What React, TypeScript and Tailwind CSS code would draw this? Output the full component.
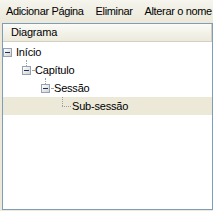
import React from 'react';

const font = { fontFamily: '"Liberation Sans", Arial, sans-serif' };

function Expander() {
  return (
    <span className="relative flex h-[9px] w-[9px] shrink-0 items-center justify-center border border-[#93a2b8] bg-gradient-to-br from-white to-[#d6d3c6]">
      <span className="h-px w-[5px] bg-[#1c2c6c]" />
    </span>
  );
}

interface NodeProps {
  label: string;
  indent: string;
  line?: boolean;
  leaf?: boolean;
  selected?: boolean;
}

function TreeRow({ label, indent, line = false, leaf = false, selected = false }: NodeProps) {
  return (
    <div className={`relative flex h-[18px] items-center ${indent} ${selected ? 'bg-[#ece9d8]' : ''}`}>
      {leaf ? (
        <span className="relative h-full w-[9px] shrink-0">
          <span className="absolute left-0 top-0 h-[9px] border-l border-dotted border-[#a0a0a0]" />
          <span className="absolute left-0 top-[9px] w-[9px] border-t border-dotted border-[#a0a0a0]" />
        </span>
      ) : (
        <span className="relative flex items-center">
          {line && <span className="absolute bottom-[9px] left-[4px] h-[6px] border-l border-dotted border-[#a0a0a0]" />}
          <Expander />
          {line && <span className="ml-px w-[2px] border-t border-dotted border-[#a0a0a0]" />}
        </span>
      )}
      <span className={`${line || leaf ? 'ml-px' : 'ml-[4px]'} text-[11px] leading-none tracking-[-0.2px] text-black`}>{label}</span>
    </div>
  );
}

export default function App() {
  return (
    <div className="flex h-[211px] w-[213px] flex-col overflow-hidden bg-[#ece9d8]" style={font}>
      <div className="flex h-[23px] shrink-0 items-center gap-[12px] whitespace-nowrap bg-gradient-to-b from-[#f6f5ee] to-[#ebe8d8] pl-[6px] text-[11px] tracking-[-0.35px] text-black">
        <span>Adicionar Página</span>
        <span>Eliminar</span>
        <span>Alterar o nome</span>
      </div>
      <div className="ml-[2px] mb-px flex flex-1 flex-col border border-[#7f9db9] bg-white">
        <div className="flex h-[18px] shrink-0 items-center border-b border-r border-[#d4d0c0] bg-gradient-to-b from-[#fbfbf8] to-[#ebeadc] pl-[8px] text-[11px] tracking-[-0.2px] text-black">
          Diagrama
        </div>
        <div className="pt-px">
          <TreeRow label="Início" indent="pl-0" />
          <TreeRow label="Capítulo" indent="pl-[19px]" line />
          <TreeRow label="Sessão" indent="pl-[38px]" line />
          <TreeRow label="Sub-sessão" indent="pl-[59px]" leaf selected />
        </div>
      </div>
    </div>
  );
}
